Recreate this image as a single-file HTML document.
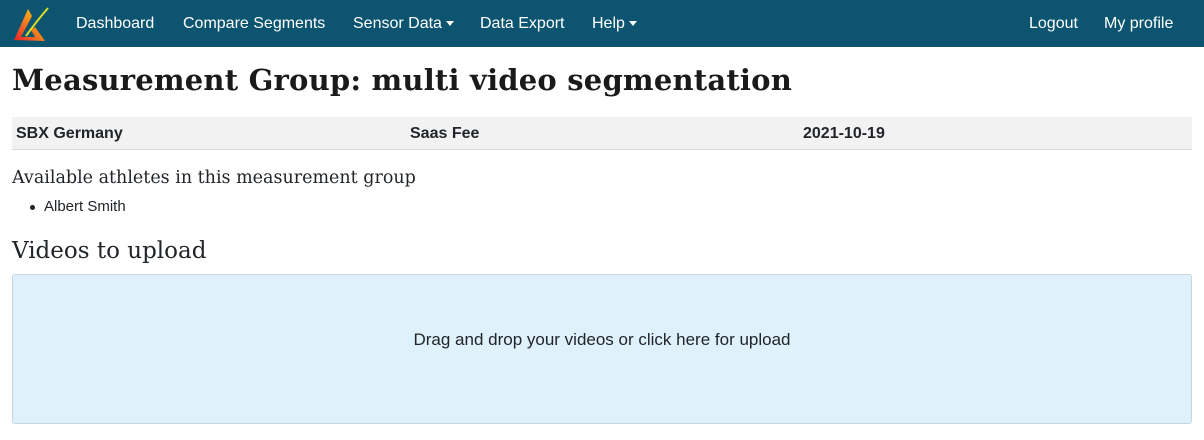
<!DOCTYPE html>
<html><head><style>
body{margin:0;font-family:"Liberation Sans",sans-serif;color:#212529;background:#fff;width:1204px;height:440px;overflow:hidden}
.nav{height:47px;background:#0c5470;position:relative;color:#fff;font-size:16px}
.nav span{position:absolute;top:15px}
h1{font-family:"DejaVu Serif",serif;font-weight:bold;font-size:29px;margin:0;position:absolute;left:12px;top:63px;letter-spacing:0.2px;color:#1a1a1a}
.row{position:absolute;left:12px;width:1180px;top:117px;height:32px;background:#f2f2f2;border-bottom:1px solid #ddd;font-weight:bold;font-size:16px}
.row span{position:absolute;top:8px}
.h5{position:absolute;left:12px;top:168px;font-family:"DejaVu Serif",serif;font-size:17.5px}
.li{position:absolute;left:44px;top:198px;font-size:15px}
.dot{position:absolute;left:30px;top:205px;width:5px;height:5px;border-radius:50%;background:#222}
.h3{position:absolute;left:12px;top:238px;font-family:"DejaVu Serif",serif;font-size:23px}
.box{position:absolute;left:12px;top:274px;width:1178px;height:148px;background:#dff1fb;border:1px solid #c9d6de;border-radius:3px;text-align:center;line-height:130px;font-size:17px}
.car{display:inline-block;border-left:4px solid transparent;border-right:4px solid transparent;border-top:5px solid #fff;vertical-align:middle;margin-left:4px}
</style></head><body>
<div class="nav">
<svg style="position:absolute;left:12px;top:6px" width="38" height="36" viewBox="0 0 38 36">
<defs><linearGradient id="g" x1="0" y1="1" x2="1" y2="0"><stop offset="0" stop-color="#e8202a"/><stop offset="0.6" stop-color="#f7941d"/><stop offset="1" stop-color="#ffd200"/></linearGradient></defs>
<path d="M2 34 L16 3 L20 10 L9 31 L23 31 L19 24 L23 21 L33 35 Z" fill="url(#g)"/>
<path d="M14 30 Q24 16 36 2" stroke="#d9e021" stroke-width="2" fill="none"/>
</svg>
<span style="left:76px">Dashboard</span>
<span style="left:183px">Compare Segments</span>
<span style="left:353px">Sensor Data<i class="car"></i></span>
<span style="left:480px">Data Export</span>
<span style="left:592px">Help<i class="car"></i></span>
<span style="left:1029px">Logout</span>
<span style="left:1104px">My profile</span>
</div>
<h1>Measurement Group: multi video segmentation</h1>
<div class="row"><span style="left:4px">SBX Germany</span><span style="left:398px">Saas Fee</span><span style="left:791px">2021-10-19</span></div>
<div class="h5">Available athletes in this measurement group</div>
<div class="dot"></div><div class="li">Albert Smith</div>
<div class="h3">Videos to upload</div>
<div class="box">Drag and drop your videos or click here for upload</div>
</body></html>
